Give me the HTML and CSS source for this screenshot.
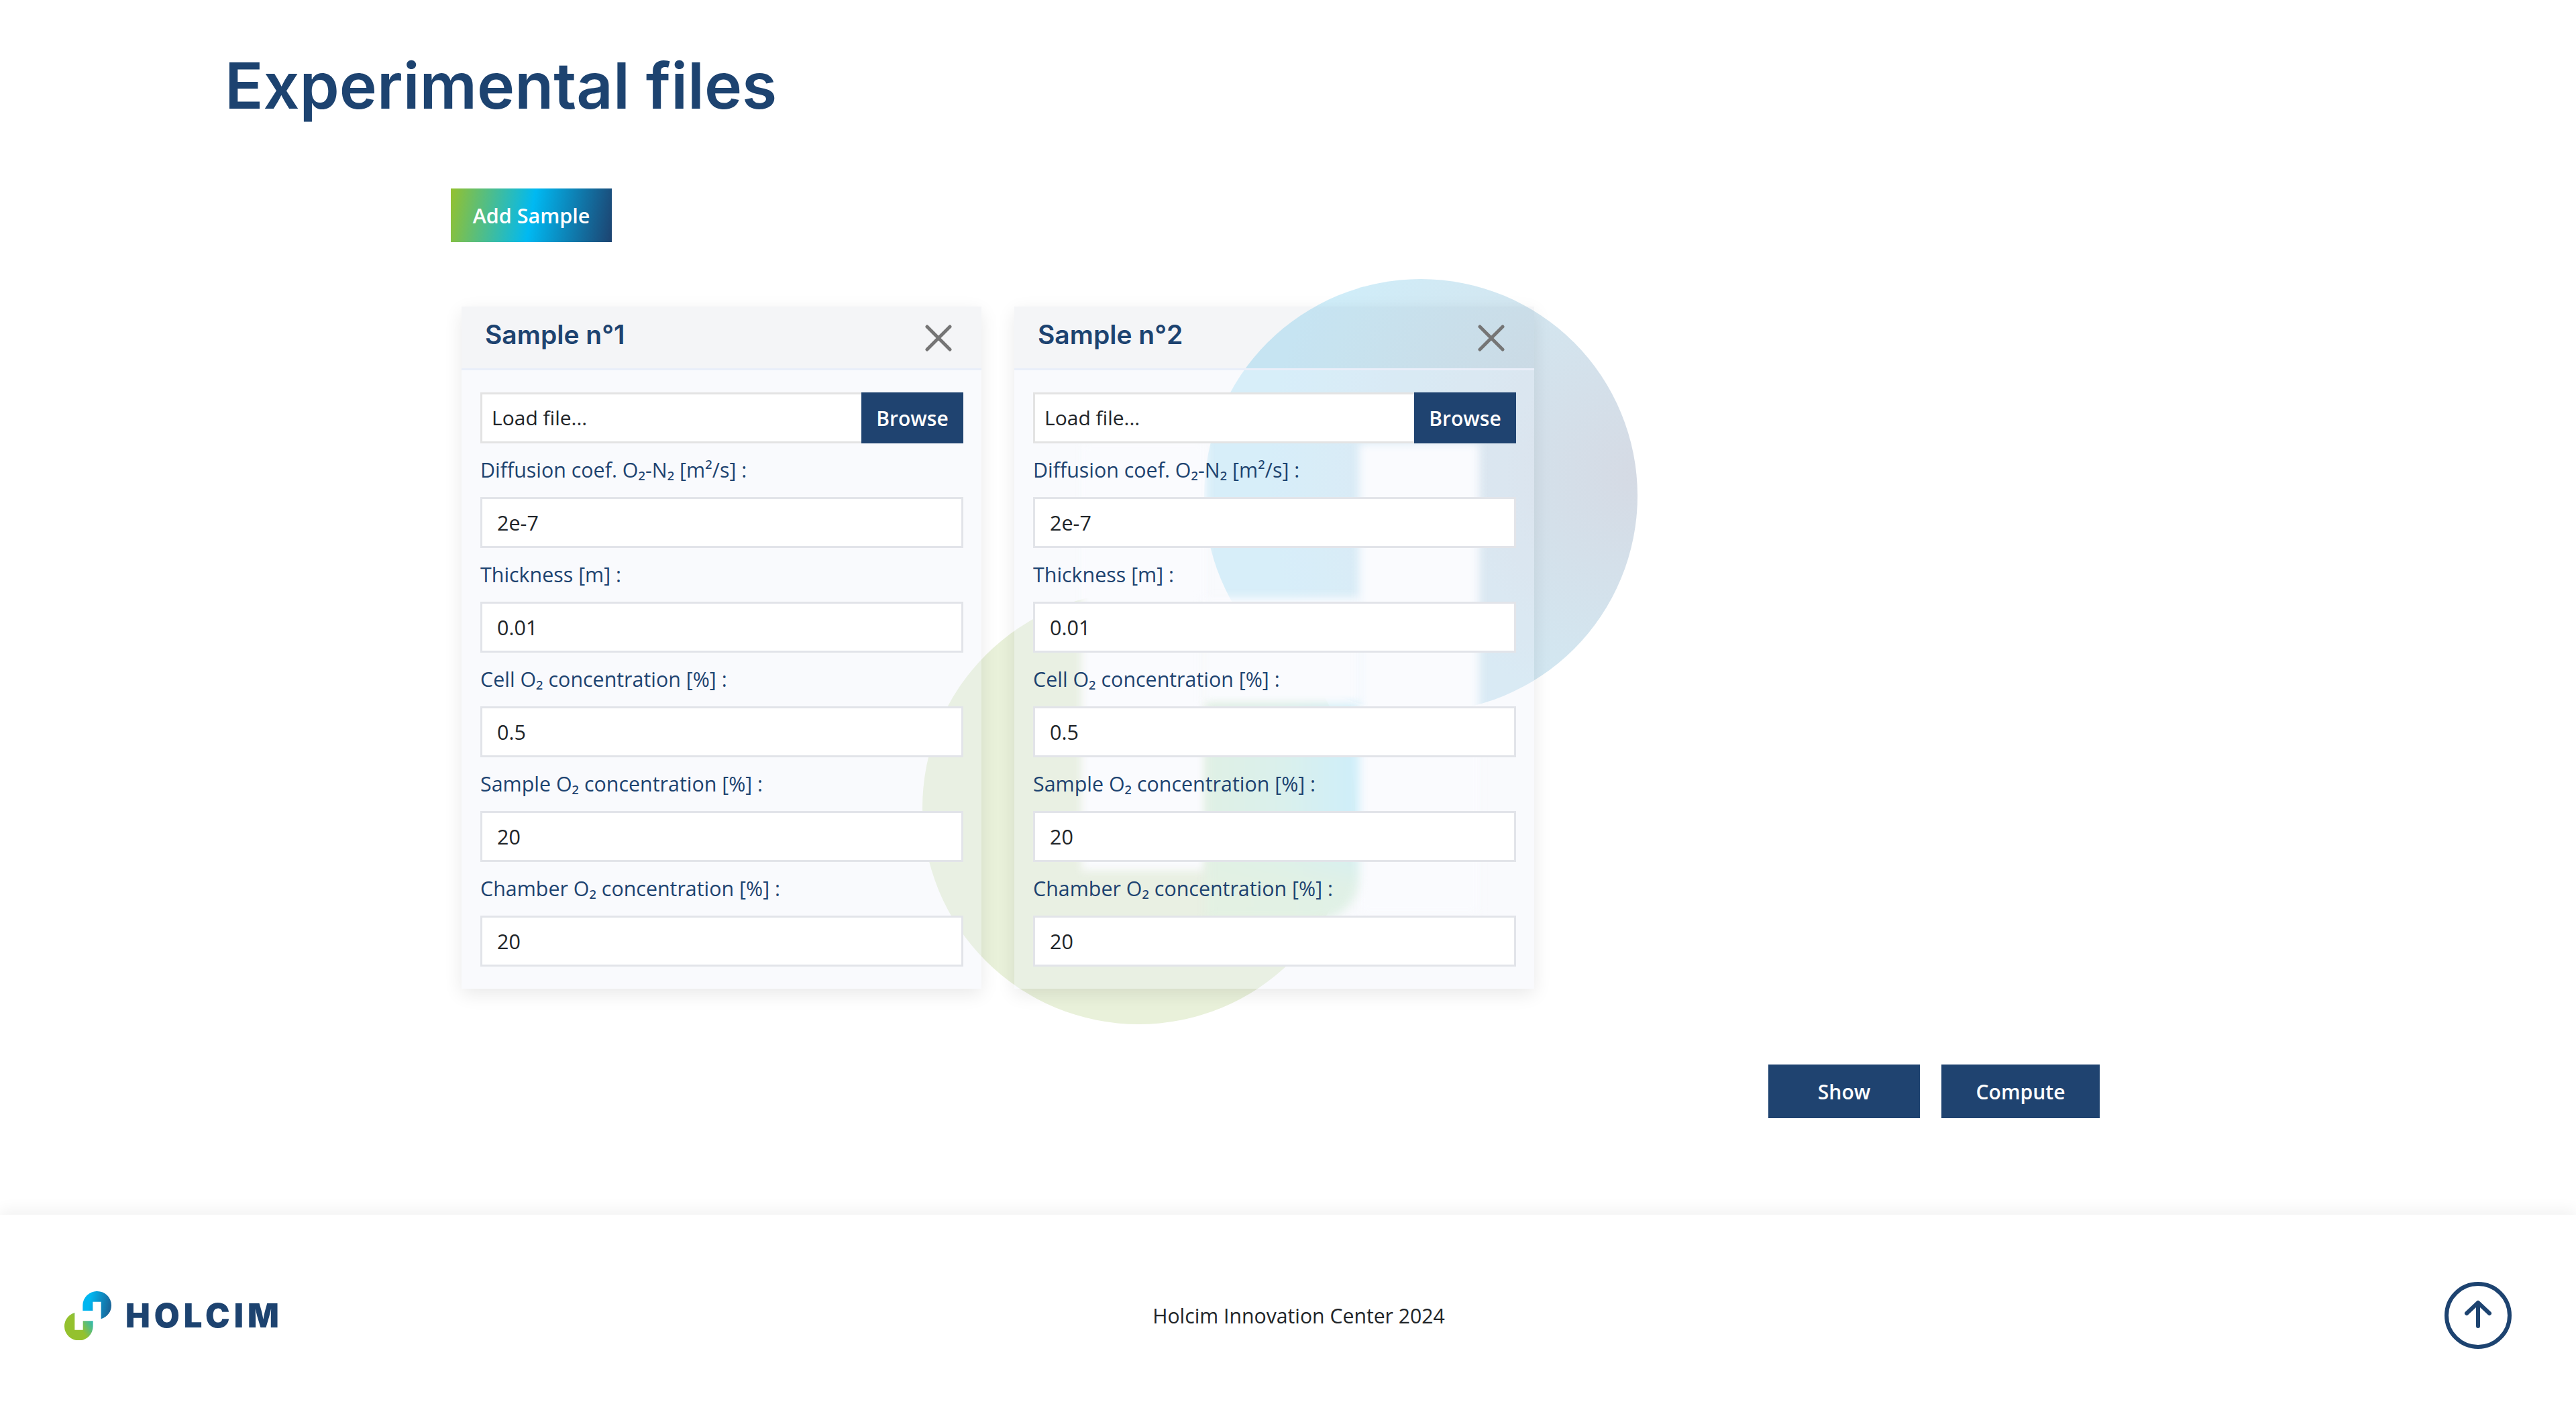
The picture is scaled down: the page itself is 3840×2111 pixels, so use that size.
FILE: index.html
```html
<!DOCTYPE html>
<html>
<head>
    <title>Experimental files</title>
    <link rel="stylesheet" href="styles.css">
</head>
<body>
    <main class="content">
        <h1 class="page-title">Experimental files</h1>
        <button type="button" class="add-btn">Add Sample</button>

        <section class="samples">
            <div class="blob blob-blue"></div>
            <div class="blob blob-green"></div>

            <div class="card">
                <div class="card-head">
                    <h2 class="card-title">Sample n°1</h2>
                    <svg class="close-icon" viewBox="0 0 40 40"><path d="M3 3 37 37M37 3 3 37"/></svg>
                </div>
                <div class="card-body">
                    <div class="file-row">
                        <div class="file-name">Load file...</div>
                        <button type="button" class="browse-btn">Browse</button>
                    </div>
                    <label class="field-label">Diffusion coef. O₂-N₂ [m²/s] :</label>
                    <input class="field-input" type="text" value="2e-7">
                    <label class="field-label">Thickness [m] :</label>
                    <input class="field-input" type="text" value="0.01">
                    <label class="field-label">Cell O₂ concentration [%] :</label>
                    <input class="field-input" type="text" value="0.5">
                    <label class="field-label">Sample O₂ concentration [%] :</label>
                    <input class="field-input" type="text" value="20">
                    <label class="field-label">Chamber O₂ concentration [%] :</label>
                    <input class="field-input" type="text" value="20">
                </div>
            </div>

            <div class="card">
                <div class="card-head">
                    <h2 class="card-title">Sample n°2</h2>
                    <svg class="close-icon" viewBox="0 0 40 40"><path d="M3 3 37 37M37 3 3 37"/></svg>
                </div>
                <div class="card-body">
                    <!-- patchy frosted glass over the circles -->
                    <div class="veil veil-a"></div>
                    <div class="veil veil-b"></div>
                    <div class="veil veil-c"></div>
                    <div class="veil veil-teal"></div>

                    <div class="file-row">
                        <div class="file-name">Load file...</div>
                        <button type="button" class="browse-btn">Browse</button>
                    </div>
                    <label class="field-label">Diffusion coef. O₂-N₂ [m²/s] :</label>
                    <input class="field-input" type="text" value="2e-7">
                    <label class="field-label">Thickness [m] :</label>
                    <input class="field-input" type="text" value="0.01">
                    <label class="field-label">Cell O₂ concentration [%] :</label>
                    <input class="field-input" type="text" value="0.5">
                    <label class="field-label">Sample O₂ concentration [%] :</label>
                    <input class="field-input" type="text" value="20">
                    <label class="field-label">Chamber O₂ concentration [%] :</label>
                    <input class="field-input" type="text" value="20">
                </div>
            </div>
        </section>

        <div class="actions">
            <button type="button" class="action-btn show-btn">Show</button>
            <button type="button" class="action-btn compute-btn">Compute</button>
        </div>
    </main>

    <footer class="footer">
        <div class="logo">
            <svg class="logo-mark" viewBox="108 128 210 219">
                <defs>
                    <linearGradient id="logoBlue" x1="0" y1="0.5" x2="1" y2="0.7">
                        <stop offset="0.2" stop-color="#00b6f0"/>
                        <stop offset="1" stop-color="#1c5f92"/>
                    </linearGradient>
                    <linearGradient id="logoGreen" x1="0.2" y1="0.7" x2="1" y2="0.2">
                        <stop offset="0.4" stop-color="#94c12e"/>
                        <stop offset="1" stop-color="#22b8c4"/>
                    </linearGradient>
                </defs>
                <path fill="url(#logoBlue)" d="M190 215V191A63 63 0 0 1 255 128A63 63 0 0 1 318 190A63 63 0 0 1 272 252V175H235V215Z"/>
                <path fill="url(#logoGreen)" d="M236 261V285A63 63 0 0 1 171 348A63 63 0 0 1 108 286A63 63 0 0 1 154 224V301H191V261Z"/>
            </svg>
            <span class="logo-text">HOLCIM</span>
        </div>
        <div class="footer-text">Holcim Innovation Center 2024</div>
        <svg class="top-icon" viewBox="0 0 100 100">
            <circle cx="50" cy="50" r="47"/>
            <path d="M33 47 50 31 67 47M50 31V66"/>
        </svg>
    </footer>
</body>
</html>
```
FILE: styles.css
```css
* {
    box-sizing: border-box;
}
body {
    margin: 0;
    background-color: #fff;
    font-family: "Open Sans", "Noto Sans", sans-serif;
    color: #212529;
}
button {
    border: none;
    font-family: inherit;
    cursor: pointer;
}
.content {
    height: 1811px;
    padding-top: 64px;
}
.page-title {
    margin: 0 0 89px 335px;
    font-family: Inter, sans-serif;
    font-size: 95px;
    font-weight: 600;
    line-height: 128px;
    color: #1d4370;
}
.add-btn {
    display: block;
    width: 240px;
    height: 80px;
    margin-left: 672px;
    background: linear-gradient(100deg, #94c12e 0%, #00b9f2 50%, #1d4370 100%);
    color: #fff;
    font-size: 30.5px;
    font-weight: 600;
}
.samples {
    position: relative;
    display: flex;
    gap: 49px;
    margin: 96px 0 0 688px;
}
.blob {
    position: absolute;
    border-radius: 50%;
}
.blob-blue {
    left: 1107px;
    top: -41px;
    width: 646px;
    height: 646px;
    background: radial-gradient(circle at 100% 45%, #d5dae4 0, #d3e6f0 40%, #cfeefa 75%);
}
.blob-green {
    left: 687px;
    top: 425px;
    width: 645px;
    height: 645px;
    background-color: #e9f1da;
}
.card {
    position: relative;
    width: 775px;
    height: 1017px;
    box-shadow: 0 8px 26px rgba(0, 0, 0, 0.09);
}
.card-head {
    display: flex;
    justify-content: space-between;
    height: 95px;
    padding: 0 44px 0 35px;
    background-color: rgba(30, 50, 90, 0.05);
    border-bottom: 3px solid #e9eef9;
}
.card-title {
    margin: 0;
    font-family: Inter, sans-serif;
    font-size: 39px;
    font-weight: 600;
    line-height: 84px;
    color: #1d4370;
}
.close-icon {
    width: 40px;
    height: 40px;
    margin-top: 27px;
    fill: none;
    stroke: #757575;
    stroke-width: 5;
    stroke-linecap: round;
}
.card-body {
    position: relative;
    overflow: hidden;
    height: 922px;
    padding: 33px 27px 32px 28px;
    background-color: rgba(235, 240, 250, 0.3);
}
.veil {
    position: absolute;
    background-color: #fafbfe;
    filter: blur(7px);
}
.veil-a {
    left: 100px;
    top: 109px;
    width: 186px;
    height: 637px;
}
.veil-b {
    left: 280px;
    top: 339px;
    width: 240px;
    height: 159px;
}
.veil-c {
    left: 514px;
    top: 109px;
    width: 179px;
    height: 700px;
}
.veil-teal {
    left: 286px;
    top: 498px;
    width: 228px;
    height: 320px;
    border-radius: 0 0 60px 0;
    background:
        linear-gradient(180deg, rgba(228, 241, 226, 0) 58%, rgba(228, 241, 226, 0.8) 85%),
        linear-gradient(90deg, #dff0e5 0%, #daf0ec 50%, #ceeefa 100%);
}
.file-row {
    position: relative;
    display: flex;
    height: 76px;
}
.file-name {
    flex: 1;
    padding: 0 14px;
    background-color: #fff;
    border: 3px solid #e3e3e3;
    border-right: none;
    font-size: 30px;
    line-height: 70px;
}
.browse-btn {
    width: 152px;
    background-color: #1f4370;
    color: #fff;
    font-size: 30px;
    font-weight: 600;
}
.field-label {
    position: relative;
    display: block;
    font-size: 30.4px;
    line-height: 80px;
    color: #1d4370;
}
.field-input {
    position: relative;
    display: block;
    width: 100%;
    height: 76px;
    padding: 0 22px;
    background-color: #fff;
    border: 3px solid #e2e4e9;
    border-radius: 0;
    font-family: inherit;
    font-size: 30.5px;
    color: #212529;
}
.actions {
    display: flex;
    justify-content: flex-end;
    gap: 32px;
    margin: 113px 710px 0 0;
}
.action-btn {
    height: 80px;
    background-color: #1f4370;
    color: #fff;
    font-size: 30px;
    font-weight: 600;
}
.show-btn {
    width: 226px;
}
.compute-btn {
    width: 236px;
}
.footer {
    display: grid;
    grid-template-columns: 1fr auto 1fr;
    align-items: center;
    height: 300px;
    padding: 0 96px;
    background-color: #fff;
    box-shadow: 0 -8px 20px rgba(0, 0, 0, 0.05);
}
.logo {
    display: flex;
    align-items: center;
    gap: 21px;
}
.logo-mark {
    width: 70px;
    height: 73px;
}
.logo-text {
    font-family: Inter, sans-serif;
    font-size: 49px;
    font-weight: 900;
    letter-spacing: 6px;
    color: #1d4370;
}
.footer-text {
    margin-left: 32px;
    font-size: 30.2px;
    color: #212529;
}
.top-icon {
    justify-self: end;
    width: 100px;
    height: 100px;
    fill: none;
    stroke: #1d4370;
    stroke-width: 6;
    stroke-linecap: round;
    stroke-linejoin: round;
}
```
